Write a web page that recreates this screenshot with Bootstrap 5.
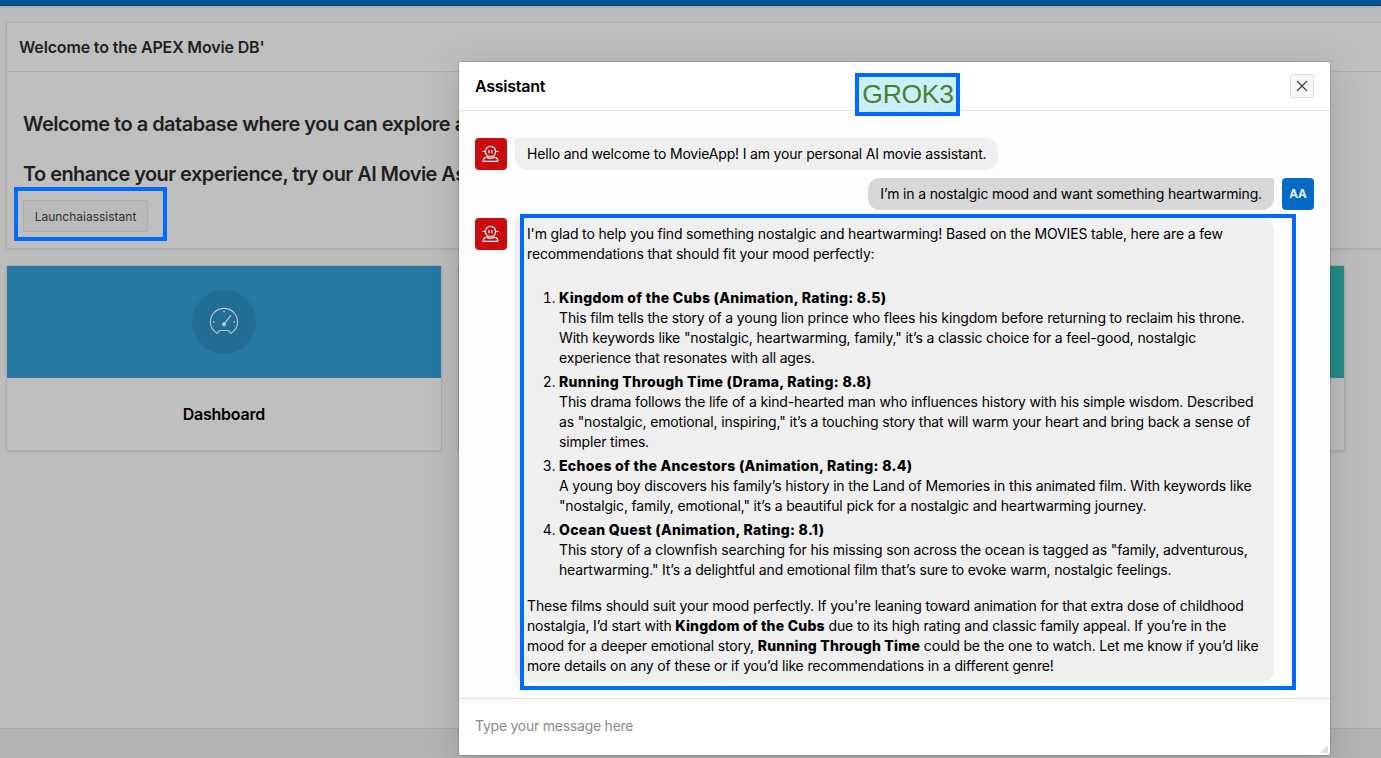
<!DOCTYPE html>
<html lang="en">
<head>
<meta charset="utf-8">
<meta name="viewport" content="width=device-width, initial-scale=1">
<title>APEX Movie DB</title>
<link href="https://cdn.jsdelivr.net/npm/bootstrap@5.3.0/dist/css/bootstrap.min.css" rel="stylesheet">
<style>
body{font-family:Inter,"Liberation Sans",sans-serif;background:#bdbdbd;height:758px;overflow:hidden;color:#1f1f1f}
.page{height:758px}
.topbar{height:6px;background:#025396;border-bottom:1px solid #0a4475;box-shadow:0 1px 3px rgba(0,0,0,.12)}
.region{margin:16px -10px 0 6px;height:227px;background:#bfbfbf;border:1px solid #adadad;border-radius:2px;box-shadow:0 1px 3px rgba(0,0,0,.07)}
.region-head{height:49px;padding-left:12px;border-bottom:1px solid #adadad;font-size:16px;font-weight:600;letter-spacing:-.16px}
.region-text{font-size:20px;line-height:30px;font-weight:600;letter-spacing:-.51px;white-space:nowrap}
.region-text.tight{letter-spacing:-.57px}
.region-body{padding:37px 16px 0}
.launch{width:125px;height:32px;margin-top:11px;padding:2px 0 0;font-size:12px;color:#303030;background:#bababa;border:1px solid #adadad;border-radius:2px;letter-spacing:0}
.tiles{display:grid;grid-template-columns:repeat(3,1fr);gap:16px;margin:16px 36px 0 6px}
.tile{height:186px;background:#bfbfbf;border:1px solid #adadad;border-radius:2px;box-shadow:0 1px 3px rgba(0,0,0,.1)}
.tile-top{height:112px;background:#2679a3}
.tile-top.teal{background:#258c88}
.disc{width:64px;height:64px;border-radius:50%;background:#226d93}
.tile-name{font-size:16px;font-weight:600;color:#000;letter-spacing:-.22px}
.page-foot{height:30px;background:#b4b4b4;border-top:1px solid #a8a8a8}
.assistant{position:absolute;left:459px;top:62px;width:871px;height:693px;background:#fdfdfd;border-radius:2px;color:#000;box-shadow:0 0 0 1px rgba(0,0,0,.14),0 8px 36px rgba(0,0,0,.17)}
.assistant-head{height:49px;padding:0 16px;background:#fff;border-bottom:1px solid #e3e3e3;border-radius:2px 2px 0 0}
.assistant-title{font-size:16px;font-weight:600;letter-spacing:-.26px}
.close-btn{width:24px;height:24px;padding:0;background:#f8f8f8;border:1px solid #dedede;border-radius:2px;line-height:0}
.chat{height:587px;padding:27px 16px 0}
.avatar{width:32px;height:32px;border-radius:4px;flex:none;background:#c90c0f}
.avatar.me{background:#056ac6;color:#fff;font-size:12px;font-weight:600}
.bubble{background:#efefef;border-radius:2px 12px 12px 12px;padding:6px 12px;font-size:14px;line-height:20px;letter-spacing:-.157px;white-space:nowrap}
.bubble.short{letter-spacing:-.175px}
.bubble.mine{background:#d8d8d8;border-radius:12px 2px 12px 12px;letter-spacing:-.153px}
.bubble b{font-weight:800;letter-spacing:.31px}
.bubble p b{letter-spacing:.22px}
.answer{width:759px}
.answer ol{margin:24px 0 16px;padding-left:32px}
.answer li+li{margin-top:4px}
.compose{height:57px;padding:0 16px 4px;background:#fff;border-top:1px solid #e0e0e0;border-radius:0 0 2px 2px;font-size:14px;letter-spacing:-.24px;color:#8b8b8b}
.grip{position:absolute;right:2px;bottom:2px}
.frame{position:absolute;border:4px solid #0069ff}
.frame-launch{left:14px;top:187px;width:153px;height:54px}
.frame-answer{left:520px;top:214px;width:776px;height:476px}
.frame-model{left:855px;top:73px;width:105px;height:43px;padding-left:1px;background:#caf0fb;color:#4b7f2b;font:26.5px/35px "Liberation Sans",Arial,sans-serif;letter-spacing:-.3px;text-align:center;white-space:nowrap}
</style>
<script src="https://cdn.jsdelivr.net/npm/bootstrap@5.3.0/dist/js/bootstrap.bundle.min.js"></script>
</head>
<body>
<svg class="d-none"><symbol id="bot" viewBox="0 0 18 18"><g fill="none" stroke="#fff" stroke-width="1.2"><circle cx="8.500" cy="6.500" r="5.200"/><path d="M3.300 6.500H.5M16.500 6.500h-2.800M1.200 16.400c0-2.400 1.300-4 3.800-4.200 2.200 1.400 4.800 1.400 7 0 2.500.2 3.800 1.800 3.800 4.200zM7 5v3.200M10 5v3.200"/></g></symbol></svg>
<div class="page d-flex flex-column">
  <header class="topbar"></header>
  <section class="region">
    <div class="region-head d-flex align-items-center">Welcome to the APEX Movie DB'</div>
    <div class="region-body">
      <div class="region-text mb-3 pb-1">Welcome to a database where you can explore a</div>
      <div class="region-text tight">To enhance your experience, try our AI Movie As</div>
      <button class="btn launch">Launchaiassistant</button>
    </div>
  </section>
  <section class="tiles">
    <div class="tile">
      <div class="tile-top d-flex align-items-center justify-content-center">
        <div class="disc d-flex align-items-center justify-content-center">
          <svg width="30" height="30" viewBox="0 0 30 30" fill="none" stroke="#c2cbd0"><path d="M8 26.300C4.500 24 1.400 20 1.400 15a13.600 13.600 0 0 1 27.200 0c0 5-3.100 9-6.600 11.300L19.200 23.500h-8.400z" stroke-width="1.100"/><path d="M14.800 17.300L22 8.200M14 4.800h2M4.700 14v2M25.300 14v2" stroke-width="1.100"/><circle cx="15" cy="17.200" r="1.700" fill="#c2cbd0" stroke-width=".6"/></svg>
        </div>
      </div>
      <div class="tile-name text-center pt-4">Dashboard</div>
    </div>
    <div class="tile"></div>
    <div class="tile"><div class="tile-top teal"></div></div>
  </section>
  <footer class="page-foot mt-auto"></footer>
</div>

<section class="assistant d-flex flex-column">
  <div class="assistant-head d-flex align-items-center justify-content-between">
    <span class="assistant-title">Assistant</span>
    <button class="btn close-btn" aria-label="Close"><svg width="12" height="12" viewBox="0 0 12 12" stroke="#3d3d3d" stroke-width="1.100"><path d="M1 1l10 10M11 1L1 11"/></svg></button>
  </div>
  <div class="chat d-flex flex-column gap-2">
    <div class="d-flex gap-2">
      <div class="avatar d-flex align-items-center justify-content-center"><svg width="18" height="18"><use href="#bot"/></svg></div>
      <div class="bubble short">Hello and welcome to MovieApp! I am your personal AI movie assistant.</div>
    </div>
    <div class="d-flex gap-2 justify-content-end">
      <div class="bubble mine">I’m in a nostalgic mood and want something heartwarming.</div>
      <div class="avatar me d-flex align-items-center justify-content-center">AA</div>
    </div>
    <div class="d-flex gap-2">
      <div class="avatar d-flex align-items-center justify-content-center"><svg width="18" height="18"><use href="#bot"/></svg></div>
      <div class="bubble answer">
        <p class="mb-0">I'm glad to help you find something nostalgic and heartwarming! Based on the MOVIES table, here are a few<br>recommendations that should fit your mood perfectly:</p>
        <ol>
          <li><b>Kingdom of the Cubs (Animation, Rating: 8.5)</b><br>This film tells the story of a young lion prince who flees his kingdom before returning to reclaim his throne.<br>With keywords like "nostalgic, heartwarming, family," it’s a classic choice for a feel-good, nostalgic<br>experience that resonates with all ages.</li>
          <li><b>Running Through Time (Drama, Rating: 8.8)</b><br>This drama follows the life of a kind-hearted man who influences history with his simple wisdom. Described<br>as "nostalgic, emotional, inspiring," it’s a touching story that will warm your heart and bring back a sense of<br>simpler times.</li>
          <li><b>Echoes of the Ancestors (Animation, Rating: 8.4)</b><br>A young boy discovers his family’s history in the Land of Memories in this animated film. With keywords like<br>"nostalgic, family, emotional," it’s a beautiful pick for a nostalgic and heartwarming journey.</li>
          <li><b>Ocean Quest (Animation, Rating: 8.1)</b><br>This story of a clownfish searching for his missing son across the ocean is tagged as "family, adventurous,<br>heartwarming." It’s a delightful and emotional film that’s sure to evoke warm, nostalgic feelings.</li>
        </ol>
        <p class="mb-0">These films should suit your mood perfectly. If you're leaning toward animation for that extra dose of childhood<br>nostalgia, I’d start with <b>Kingdom of the Cubs</b> due to its high rating and classic family appeal. If you’re in the<br>mood for a deeper emotional story, <b>Running Through Time</b> could be the one to watch. Let me know if you’d like<br>more details on any of these or if you’d like recommendations in a different genre!</p>
      </div>
    </div>
  </div>
  <div class="compose d-flex align-items-center">Type your message here</div>
  <svg class="grip" width="8" height="8" viewBox="0 0 8 8"><path d="M8 0v8H0z" fill="#e0e0e0"/></svg>
</section>

<div class="frame frame-launch"></div>
<div class="frame frame-answer"></div>
<div class="frame frame-model">GROK3</div>
</body>
</html>
